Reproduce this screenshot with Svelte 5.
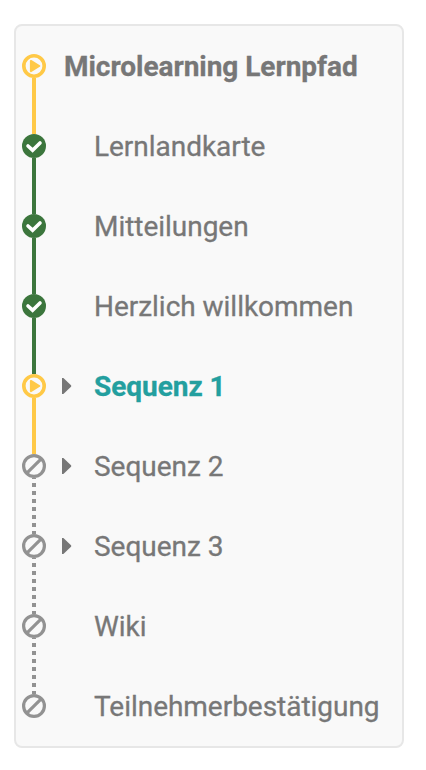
<script>
  const items = [
    { label: 'Microlearning Lernpfad', state: 'running', root: true },
    { label: 'Lernlandkarte', state: 'done' },
    { label: 'Mitteilungen', state: 'done' },
    { label: 'Herzlich willkommen', state: 'done' },
    { label: 'Sequenz 1', state: 'running', folder: true, active: true },
    { label: 'Sequenz 2', state: 'open', folder: true },
    { label: 'Sequenz 3', state: 'open', folder: true },
    { label: 'Wiki', state: 'open' },
    { label: 'Teilnehmerbestätigung', state: 'open' }
  ];
</script>

<nav class="panel">
  <ul>
    {#each items as item, i}
      <li class="row" class:root={item.root} class:active={item.active}>
        <span class="track">
          <!-- upper half of the connector belongs to the previous step -->
          <span class="line upper {items[i - 1]?.state ?? ''}"></span>
          <svg class="status" viewBox="0 0 24 24" aria-hidden="true">
            {#if item.state === 'running'}
              <circle cx="12" cy="12" r="10.2" fill="none" stroke="#ffc947" stroke-width="3.6" />
              <path d="M8.9 6.9 17.3 12 8.9 17.1Z" fill="#ffc947" stroke="#ffc947" stroke-width="2" stroke-linejoin="round" />
            {:else if item.state === 'done'}
              <circle cx="12" cy="12" r="12" fill="#3c763d" />
              <path d="M6 12 10.6 16.2 18 9" fill="none" stroke="#fff" stroke-width="3.6" stroke-linecap="round" stroke-linejoin="miter" />
            {:else}
              <circle cx="12" cy="12" r="10.4" fill="none" stroke="#929292" stroke-width="3.2" />
              <path d="M4.8 19.2 19.2 4.8" fill="none" stroke="#929292" stroke-width="3.2" />
            {/if}
          </svg>
          <span class="line lower {i < items.length - 1 ? item.state : ''}"></span>
        </span>
        <span class="caret">
          {#if item.folder}
            <svg viewBox="0 0 10 16" aria-hidden="true"><path d="M0 0H1.4L9 7.2Q9.6 8 9 8.8L1.4 16H0Z" fill="#777" /></svg>
          {/if}
        </span>
        <span class="label">{item.label}</span>
      </li>
    {/each}
  </ul>
</nav>

<style>
  :global(body) {
    background: #fff;
  }
  .panel {
    box-sizing: border-box;
    width: 390px;
    margin: 24px 0 0 14px;
    border: 2px solid #e7e7e7;
    border-radius: 8px;
    background: #f9f9f9;
    font-family: Roboto, sans-serif;
    font-size: 28px;
    letter-spacing: -0.03px;
    color: #777;
  }
  ul {
    list-style: none;
    margin: 0;
    padding: 0;
  }
  .row {
    display: flex;
    height: 80px;
    padding-left: 6px;
  }
  .track {
    display: flex;
    flex-direction: column;
    align-items: center;
    width: 24px;
    height: 80px;
  }
  .status {
    display: block;
    flex: none;
    width: 24px;
    height: 24px;
  }
  .line {
    flex: 1;
    width: 4px;
  }
  .line.running {
    background: #ffc947;
  }
  .line.done {
    background: #3c763d;
  }
  .line.open {
    background: linear-gradient(to bottom, #929292 50%, transparent 50%);
    background-size: 4px 8px;
  }
  .upper.open {
    background-position: 0 1px;
  }
  .lower.open {
    background-position: 0 -3px;
  }
  .caret {
    display: flex;
    align-items: center;
    width: 32px;
    padding-left: 16px;
  }
  .caret svg {
    width: 10px;
    height: 16px;
  }
  .label {
    line-height: 82px;
    white-space: nowrap;
    -webkit-text-stroke: 0.3px currentColor;
  }
  .root .caret {
    width: 2px;
  }
  .root .label,
  .active .label {
    font-weight: 700;
  }
  .active .label {
    color: #239f9f;
  }
</style>
